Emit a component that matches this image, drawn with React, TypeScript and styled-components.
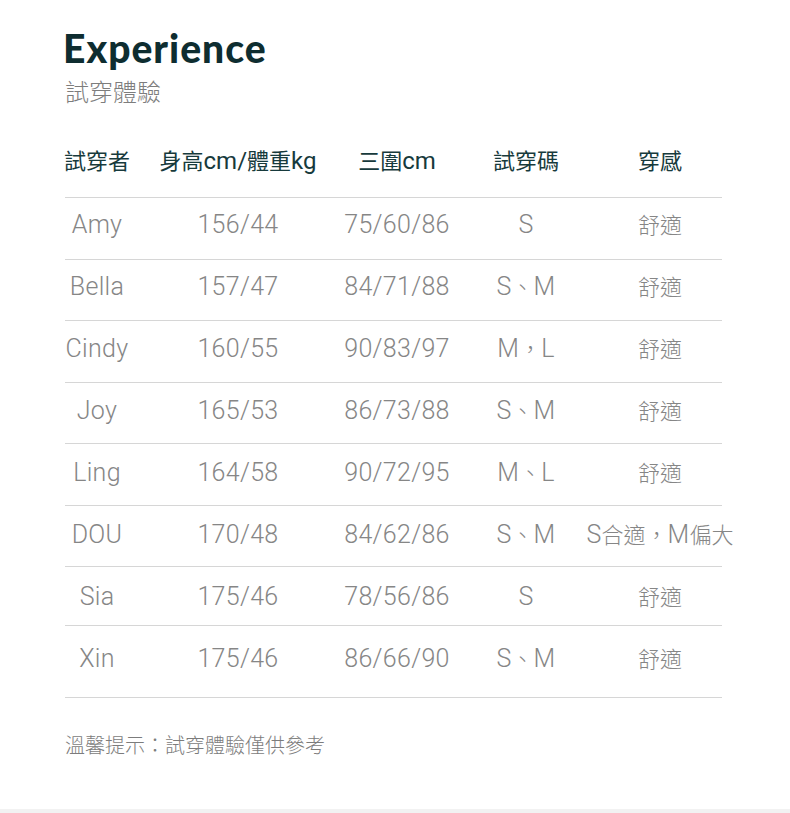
import React from "react";
import styled, { createGlobalStyle } from "styled-components";

const GlobalStyle = createGlobalStyle`
  html, body {
    margin: 0;
    padding: 0;
    background: #ffffff;
    overflow: hidden;
  }
  body {
    font-family: Roboto, "Noto Sans CJK TC", sans-serif;
  }
`;

const Page = styled.div`
  width: 790px;
  height: 813px;
  display: flex;
  flex-direction: column;
  background: #ffffff;
`;

const Content = styled.div`
  padding: 26px 0 0 65px;
  display: flex;
  flex-direction: column;
`;

const Title = styled.h1`
  margin: 0;
  font-family: Lato, "Liberation Sans", sans-serif;
  font-weight: 900;
  font-size: 39px;
  letter-spacing: 1px;
  line-height: 44px;
  color: #0e2d30;
  margin-left: -2px;
`;

const Subtitle = styled.div`
  margin-top: 6px;
  font-family: "Noto Sans CJK TC", sans-serif;
  font-weight: 300;
  font-size: 24px;
  line-height: 30px;
  color: #7d7d7d;
`;

const Table = styled.div`
  margin-top: 26px;
  width: 657px;
  display: flex;
  flex-direction: column;
`;

const cols = "64px 218px 100px 158px 110px 1fr";

const HeaderRow = styled.div`
  display: grid;
  grid-template-columns: ${cols};
  height: 65px;
  box-sizing: border-box;
  padding-top: 15px;
  align-items: start;
`;

const Row = styled.div<{ $h: number; $pt: number; $last?: boolean }>`
  display: grid;
  grid-template-columns: ${cols};
  height: ${(p) => p.$h}px;
  box-sizing: border-box;
  padding-top: ${(p) => p.$pt}px;
  align-items: start;
  border-top: 1px solid #d6d6d6;
  border-bottom: ${(p) => (p.$last ? "1px solid #d6d6d6" : "none")};
`;

const Cell = styled.div<{ $head?: boolean }>`
  display: flex;
  justify-content: center;
  white-space: nowrap;
  font-family: Roboto, "Noto Sans CJK TC", sans-serif;
  font-size: ${(p) => (p.$head ? 24 : 25)}px;
  letter-spacing: ${(p) => (p.$head ? 0 : 0.3)}px;
  line-height: 28px;
  font-weight: ${(p) => (p.$head ? 400 : 300)};
  color: ${(p) => (p.$head ? "#173a3c" : "#868686")};
`;

const Cjk = styled.span`
  font-family: "Noto Sans CJK TC", sans-serif;
  font-size: 22px;
  letter-spacing: 0;
  line-height: 1;
`;

const Footer = styled.div`
  margin-top: 33px;
  font-family: "Noto Sans CJK TC", sans-serif;
  font-weight: 300;
  font-size: 20px;
  line-height: 28px;
  color: #7c7c7c;
`;

const Band = styled.div`
  margin-top: auto;
  height: 4px;
  background: #f2f2f2;
`;

const CJK_RE = /([\u3000-\u9fff\uff00-\uffef]+)/;

const Mixed = ({ text }: { text: string }) => (
  <span>
    {text
      .split(CJK_RE)
      .filter(Boolean)
      .map((part, i) =>
        CJK_RE.test(part) ? (
          <Cjk key={i}>{part}</Cjk>
        ) : (
          <React.Fragment key={i}>{part}</React.Fragment>
        )
      )}
  </span>
);

const headers = ["試穿者", "身高cm/體重kg", "三圍cm", "試穿碼", "穿感"];

type Entry = { cells: string[]; h: number; pt: number };

const rows: Entry[] = [
  { cells: ["Amy", "156/44", "75/60/86", "S", "舒適"], h: 62, pt: 13 },
  { cells: ["Bella", "157/47", "84/71/88", "S、M", "舒適"], h: 61, pt: 13 },
  { cells: ["Cindy", "160/55", "90/83/97", "M，L", "舒適"], h: 62, pt: 14 },
  { cells: ["Joy", "165/53", "86/73/88", "S、M", "舒適"], h: 61, pt: 14 },
  { cells: ["Ling", "164/58", "90/72/95", "M、L", "舒適"], h: 62, pt: 15 },
  { cells: ["DOU", "170/48", "84/62/86", "S、M", "S合適，M偏大"], h: 61, pt: 15 },
  { cells: ["Sia", "175/46", "78/56/86", "S", "舒適"], h: 59, pt: 16 },
  { cells: ["Xin", "175/46", "86/66/90", "S、M", "舒適"], h: 73, pt: 19 },
];

export default function App() {
  return (
    <Page>
      <GlobalStyle />
      <Content>
        <Title>Experience</Title>
        <Subtitle>試穿體驗</Subtitle>
        <Table>
          <HeaderRow>
            {headers.map((h) => (
              <Cell $head key={h}>
                <Mixed text={h} />
              </Cell>
            ))}
          </HeaderRow>
          {rows.map((r, i) => (
            <Row key={i} $h={r.h} $pt={r.pt} $last={i === rows.length - 1}>
              {r.cells.map((c, j) => (
                <Cell key={j}>
                  <Mixed text={c} />
                </Cell>
              ))}
            </Row>
          ))}
        </Table>
        <Footer>溫馨提示：試穿體驗僅供參考</Footer>
      </Content>
      <Band />
    </Page>
  );
}
